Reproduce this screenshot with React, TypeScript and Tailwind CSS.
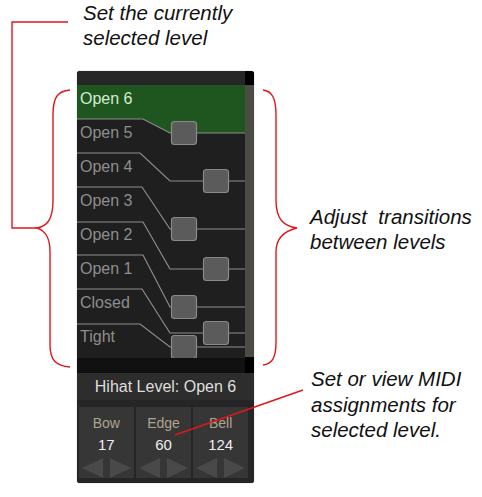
import React from 'react';

const LEVELS = ['Open 6', 'Open 5', 'Open 4', 'Open 3', 'Open 2', 'Open 1', 'Closed', 'Tight'];

// transition curves between neighbouring levels, list-area coordinates
const TRANSITIONS = [
  { leftY: 34, bendX: 66, rightY: 48, boxX: 107 },
  { leftY: 68, bendX: 63, rightY: 96, boxX: 139 },
  { leftY: 102, bendX: 65, rightY: 144, boxX: 107 },
  { leftY: 137, bendX: 66, rightY: 184, boxX: 139 },
  { leftY: 170, bendX: 66, rightY: 222, boxX: 107 },
  { leftY: 204, bendX: 65, rightY: 248, boxX: 139 },
  { leftY: 239, bendX: 63, rightY: 262, boxX: 107 },
];

const MIDI = [
  { name: 'Bow', value: 17 },
  { name: 'Edge', value: 60 },
  { name: 'Bell', value: 124 },
];

const LIST_W = 168;
const LIST_H = 288;

function TransitionCanvas() {
  const first = TRANSITIONS[0];
  return (
    <svg
      className="absolute inset-0 pointer-events-none"
      width={LIST_W}
      height={LIST_H}
      viewBox={`0 0 ${LIST_W} ${LIST_H}`}
    >
      <polygon
        points={`0,0 ${LIST_W},0 ${LIST_W},${first.rightY} 93,${first.rightY} ${first.bendX},${first.leftY} 0,${first.leftY}`}
        fill="#1f561f"
      />
      {TRANSITIONS.map((t, i) => (
        <polyline
          key={`l${i}`}
          points={`0,${t.leftY} ${t.bendX},${t.leftY} 93,${t.rightY} ${LIST_W},${t.rightY}`}
          fill="none"
          stroke="#8d8d8d"
          strokeWidth="1.2"
        />
      ))}
      {TRANSITIONS.map((t, i) => (
        <rect
          key={`b${i}`}
          x={t.boxX - 12.5}
          y={t.rightY - 11.5}
          width="25"
          height="23"
          rx="3"
          fill="#5b5b5b"
          stroke="#8a8a8a"
          strokeWidth="1.2"
        />
      ))}
    </svg>
  );
}

function ArrowPair() {
  return (
    <div className="flex items-end gap-[7px] h-[20px]">
      <svg width="21" height="20" viewBox="0 0 21 20">
        <polygon points="21,0 21,20 0,10" fill="#494949" />
      </svg>
      <svg width="21" height="20" viewBox="0 0 21 20">
        <polygon points="0,0 0,20 21,10" fill="#494949" />
      </svg>
    </div>
  );
}

function HihatPanel() {
  return (
    <div className="w-[177px] rounded-[3px] overflow-hidden bg-[#1c1c1c] font-['Liberation_Sans',Arial,sans-serif] shadow-[0_0_1px_rgba(0,0,0,0.6)]">
      <div className="flex h-[14px]">
        <div className="w-[168px] bg-[#262626]" />
        <div className="flex-1 bg-black" />
      </div>

      <div className="flex h-[288px]">
        <div className="relative w-[168px] h-[288px] bg-[#1f1f1f]">
          <TransitionCanvas />
          <div className="relative flex flex-col">
            {LEVELS.map((level, i) => (
              <div
                key={level}
                className={`h-[34px] pl-[3px] pt-[4px] text-[16px] leading-[20px] ${
                  i === 0 ? 'text-[#d3ecd0]' : 'text-[#8e8e8e]'
                }`}
              >
                {level}
              </div>
            ))}
          </div>
          <div className="absolute left-0 right-0 bottom-0 h-[15px] bg-[#111]" />
        </div>
        <div className="flex-1 flex flex-col bg-black">
          <div className="h-[272px] bg-[#4c4c44]" />
        </div>
      </div>

      <div className="h-[27px] bg-[#2d2d2d] flex items-center justify-center text-[16px] text-[#dedede]">
        Hihat Level: Open 6
      </div>

      <div className="bg-[#252525] pl-[2px] pr-[6px] pt-[7px] pb-[5px] flex gap-[2.5px]">
        {MIDI.map((m) => (
          <div
            key={m.name}
            className="flex-1 h-[71px] bg-[#363636] flex flex-col items-center"
          >
            <div className="mt-[7px] text-[14px] leading-[18px] text-[#ada58d]">{m.name}</div>
            <div className="mt-[4px] text-[15px] leading-[18px] text-[#efefef]">{m.value}</div>
            <div className="mt-auto">
              <ArrowPair />
            </div>
          </div>
        ))}
      </div>
    </div>
  );
}

function Annotations() {
  return (
    <svg
      className="absolute inset-0 pointer-events-none"
      width="482"
      height="497"
      viewBox="0 0 482 497"
      fill="none"
      stroke="#e0161b"
      strokeWidth="1.4"
    >
      <path d="M68 22 H12 V228 H37" />
      <path d="M70 90 C57 91 53 98 53 115 V200 C53 220 47 226 37 228 C46 231 50 238 50 252 V345 C50 360 56 366 70 367" />
      <path d="M263 90 C272 91 276 98 276 115 V200 C276 220 284 226 297 228 C284 231 276 238 276 252 V342 C276 358 272 364 263 365" />
      <path d="M303 390 L175 435" />
    </svg>
  );
}

export default function App() {
  return (
    <div className="relative w-[482px] h-[497px] bg-white overflow-hidden font-['Liberation_Sans',Arial,sans-serif] italic text-[#111]">
      <div className="pl-[83px] text-[20.5px] leading-[25px]">
        <div>Set the currently</div>
        <div>selected level</div>
      </div>

      <div className="flex mt-[21px] pl-[77px] not-italic">
        <HihatPanel />
        <div className="ml-[56px] italic text-[20.5px] text-[#111] flex flex-col">
          <div className="mt-[133px] leading-[25px]">
            <div className="whitespace-pre">Adjust  transitions</div>
            <div>between levels</div>
          </div>
          <div className="mt-[112px] ml-[1px] leading-[25.5px]">
            <div>Set or view MIDI</div>
            <div>assignments for</div>
            <div>selected level.</div>
          </div>
        </div>
      </div>

      <Annotations />
    </div>
  );
}
